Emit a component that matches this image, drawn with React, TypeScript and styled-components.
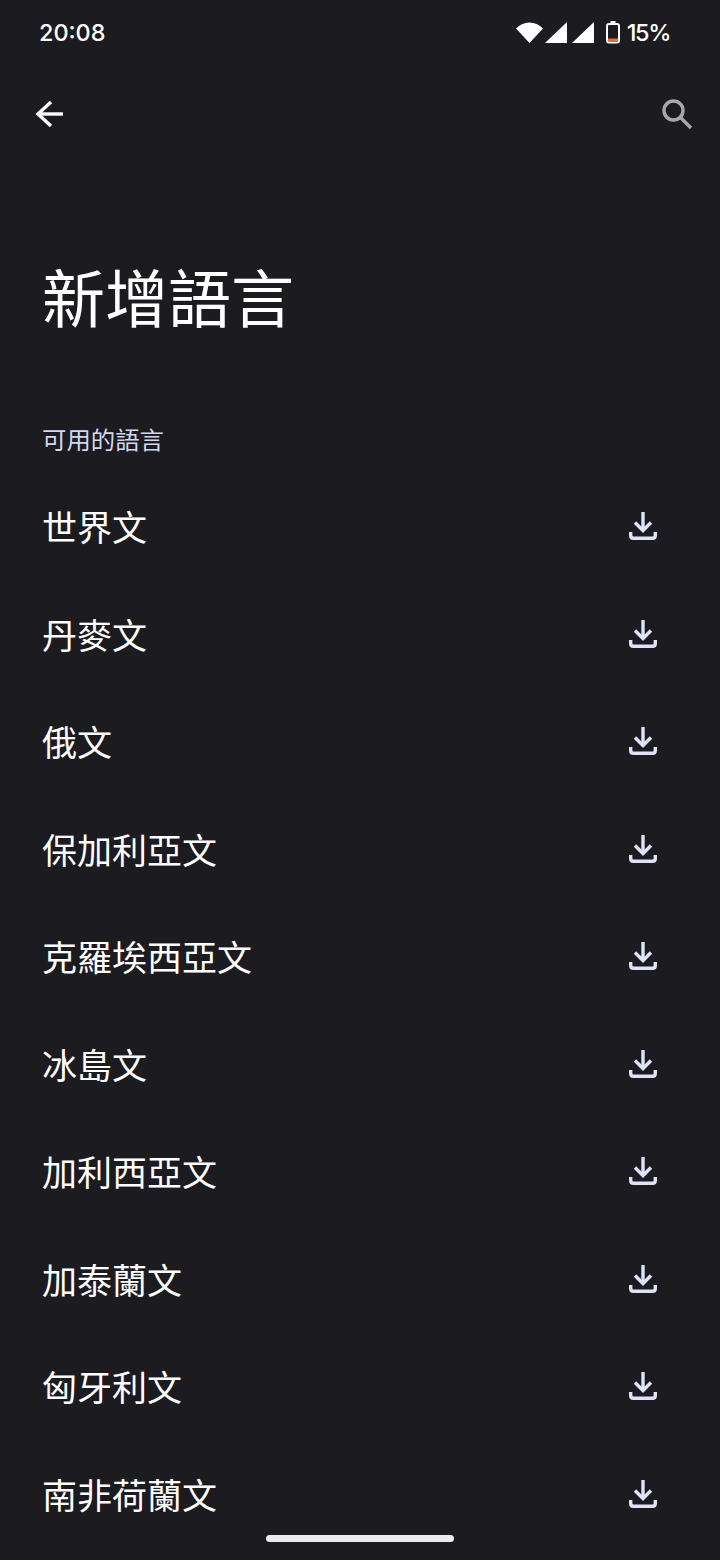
import styled, { createGlobalStyle } from "styled-components";

const languages = [
  "世界文",
  "丹麥文",
  "俄文",
  "保加利亞文",
  "克羅埃西亞文",
  "冰島文",
  "加利西亞文",
  "加泰蘭文",
  "匈牙利文",
  "南非荷蘭文",
];

const GlobalStyle = createGlobalStyle`
  html, body {
    margin: 0;
    padding: 0;
    background: #1c1b20;
  }
`;

const Screen = styled.div`
  position: relative;
  width: 720px;
  height: 1560px;
  overflow: hidden;
  background: #1c1b20;
  color: #fff;
  font-family: "Noto Sans CJK TC", "Noto Sans", sans-serif;
`;

const StatusBar = styled.div`
  display: flex;
  align-items: center;
  justify-content: space-between;
  height: 64px;
  padding: 0 50px 0 39px;
`;

const StatusTime = styled.span`
  font-family: "Inter", "Roboto", sans-serif;
  font-size: 23.4px;
  font-weight: 500;
  color: #fff;
`;

const BatteryLevel = styled(StatusTime)`
  letter-spacing: -1.4px;
`;

const StatusIcons = styled.div`
  display: flex;
  align-items: center;
`;

const Toolbar = styled.div`
  display: flex;
  align-items: center;
  justify-content: space-between;
  height: 100px;
  padding: 0 26px 0 32px;
`;

const Title = styled.h1`
  margin: 0;
  padding: 91px 42px 0;
  font-size: 63px;
  font-weight: 400;
  line-height: 80px;
`;

const SectionLabel = styled.div`
  padding: 84px 42px 0;
  font-size: 24.4px;
  line-height: 40px;
  color: #d3d7f0;
`;

const List = styled.div`
  display: flex;
  flex-direction: column;
  padding-top: 13.5px;
`;

const Row = styled.div`
  display: flex;
  align-items: center;
  justify-content: space-between;
  height: 107.5px;
  padding: 0 63px 0 42px;
`;

const RowName = styled.span`
  font-size: 35px;
  line-height: 48px;
  color: #fff;
`;

const NavHandle = styled.div`
  position: absolute;
  left: 266px;
  bottom: 18px;
  width: 188px;
  height: 7px;
  border-radius: 4px;
  background: #ececec;
`;

const BackIcon = () => (
  <svg width="34" height="34" viewBox="0 0 34 34" fill="none" stroke="#fff" strokeWidth="3.4">
    <path d="M31 17H6" />
    <path d="M19 5L6 17L19 29" />
  </svg>
);

const SearchIcon = () => (
  <svg width="34" height="34" viewBox="0 0 34 34" fill="none" stroke="#a8a8a8" strokeWidth="3.4">
    <circle cx="13.5" cy="13.5" r="9.5" />
    <path d="M20.5 20.5L31 31" />
  </svg>
);

const DownloadIcon = () => (
  <svg width="28" height="28" viewBox="0 0 28 28" fill="none" stroke="#dfe2f8" strokeWidth="3.4">
    <path d="M14 0V18" />
    <path d="M6 10.5L14 18.5L22 10.5" />
    <path d="M1.7 20V23.5C1.7 25.3 2.7 26.3 4.5 26.3H23.5C25.3 26.3 26.3 25.3 26.3 23.5V20" />
  </svg>
);

const WifiIcon = () => (
  <svg width="28" height="24" viewBox="0 0 28 24">
    <path d="M0 8.5C7.5 0.5 19.5 0.5 27 8.5L13.5 23Z" fill="#fff" />
  </svg>
);

const SignalIcon = () => (
  <svg width="27" height="24" viewBox="0 0 27 24">
    <path d="M23 2V23H1Z" fill="#fff" />
  </svg>
);

const BatteryIcon = () => (
  <svg width="29" height="24" viewBox="0 0 29 24">
    <path d="M12.5 1H17.5V4H12.5Z" fill="#fff" />
    <rect x="9" y="4" width="12" height="18.5" rx="2" fill="none" stroke="#fff" strokeWidth="2" />
    <rect x="10" y="18.5" width="10" height="3" fill="#f0693c" />
  </svg>
);

export default function App() {
  return (
    <Screen>
      <GlobalStyle />
      <StatusBar>
        <StatusTime>20:08</StatusTime>
        <StatusIcons>
          <WifiIcon />
          <SignalIcon />
          <SignalIcon />
          <BatteryIcon />
          <BatteryLevel>15%</BatteryLevel>
        </StatusIcons>
      </StatusBar>
      <Toolbar>
        <BackIcon />
        <SearchIcon />
      </Toolbar>
      <Title>新增語言</Title>
      <SectionLabel>可用的語言</SectionLabel>
      <List>
        {languages.map((name) => (
          <Row key={name}>
            <RowName>{name}</RowName>
            <DownloadIcon />
          </Row>
        ))}
      </List>
      <NavHandle />
    </Screen>
  );
}
